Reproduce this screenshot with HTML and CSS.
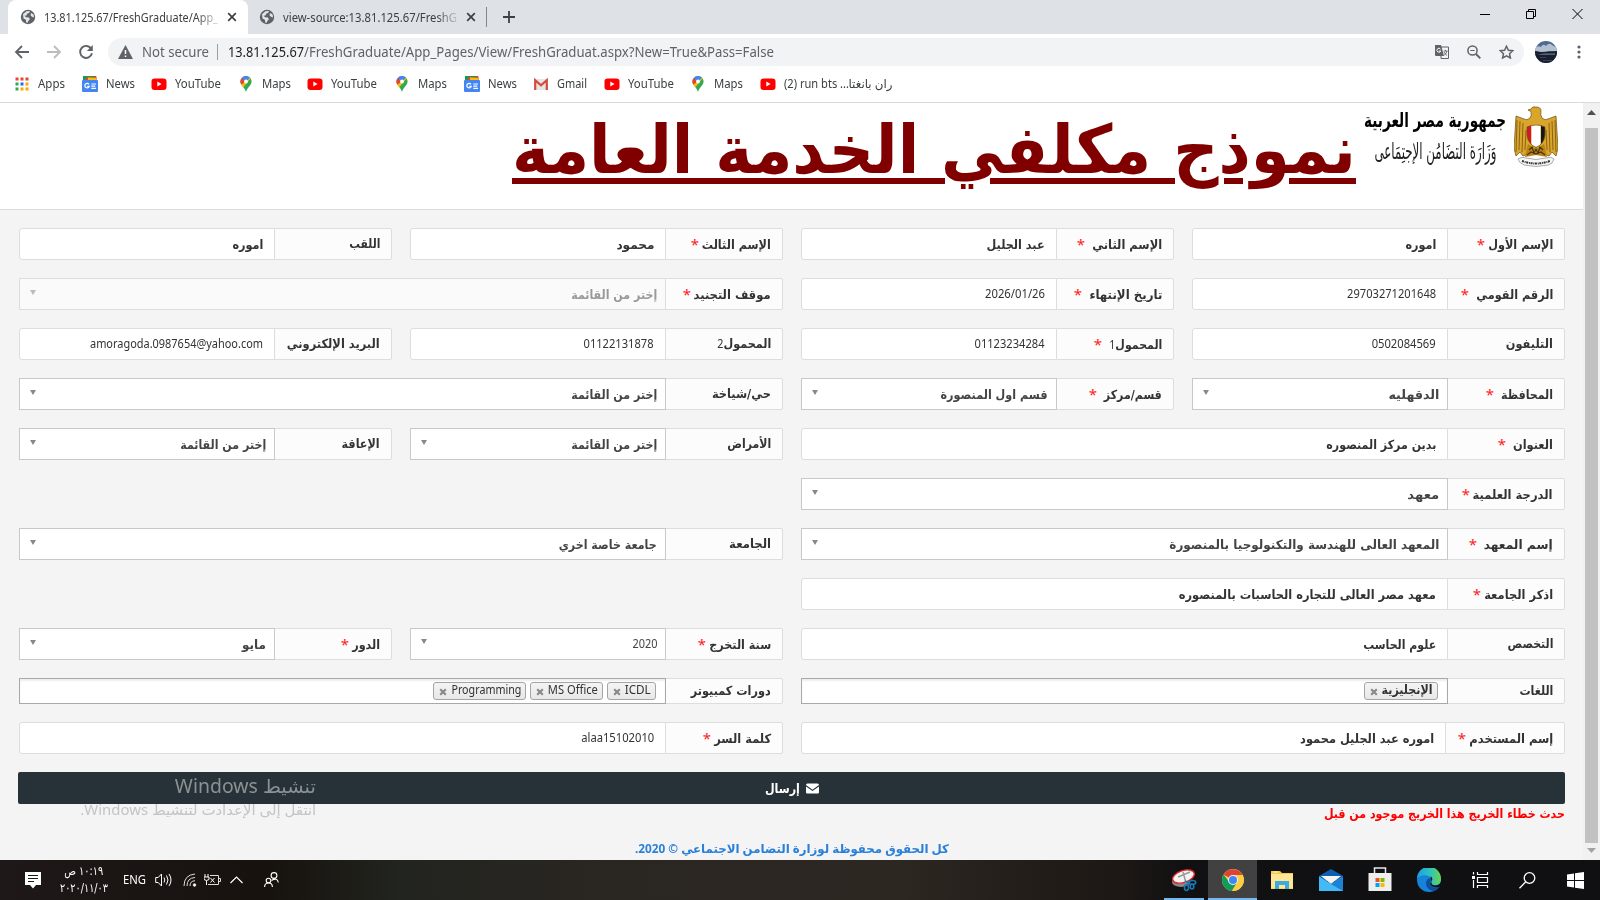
FILE: index.html
```html
<!DOCTYPE html>
<html lang="ar">
<head>
<meta charset="utf-8">
<title>نموذج مكلفي الخدمة العامة</title>
<link rel="stylesheet" href="styles.css">
</head>
<body>
<svg width="0" height="0" class="defs">
  <symbol id="globe" viewBox="0 0 16 16"><circle cx="8" cy="8" r="7.2" fill="#5f6368"/><path d="M3 5.2 6.5 2.2 10 2l-1 2-2 .8-.5 1.6-2 .4 1.6 1.4 2.8.3 1 1.8-1.6 1.6-.6 1.9-1.5-.4-.3-2.6L3.500 9.500zM11 4l2.600 1.500.4 3-2-.8-1.500-1.500z" fill="#e4e6e9"/></symbol>
  <symbol id="x" viewBox="0 0 10 10"><path d="M1.200 1.200l7.600 7.600M8.800 1.200L1.200 8.800" stroke="#3c4043" stroke-width="1.700"/></symbol>
  <symbol id="xb" viewBox="0 0 10 10"><path d="M1.500 1.500l7 7M8.500 1.500l-7 7" stroke="#888" stroke-width="2.600"/></symbol>
  <symbol id="yt" viewBox="0 0 16 16"><rect x=".5" y="2.500" width="15" height="11.500" rx="3" fill="#f00"/><path d="M6.300 5.600v5L10.600 8.100z" fill="#fff"/></symbol>
  <symbol id="pin" viewBox="0 0 16 16"><path d="M8 0a5.600 5.600 0 0 1 5.600 5.600C13.600 9.500 9.500 11 8 16 6.500 11 2.400 9.500 2.400 5.600A5.600 5.600 0 0 1 8 0z" fill="#34a853"/><path d="M8 5.600L3.600 2.200A5.600 5.600 0 0 1 12 1.700z" fill="#4285f4"/><path d="M8 5.600L3.600 2.200A5.600 5.600 0 0 0 3.300 8.600z" fill="#ea4335"/><path d="M8 5.600L3.200 8.700 5.300 11.300 12.600 2.400 12 1.700z" fill="#fbbc04"/><circle cx="8" cy="5.600" r="2" fill="#fff"/></symbol>
  <symbol id="gn" viewBox="0 0 16 16"><path d="M1 0h13v5H1z" fill="#0f9d58"/><path d="M3.500 1.500L14.500.5l.5 5H4z" fill="#ea4335"/><path d="M6 1.500l9 .5-1 4H6z" fill="#fbbc04"/><rect y="4" width="16" height="12" rx="1" fill="#4285f4"/><path d="M7 8.300A2.300 2.300 0 1 0 7.300 10.300H5.200M9.300 8h4.700M9.300 10.200h4M9.300 12.400h4.700" fill="none" stroke="#fff" stroke-width="1.200"/></symbol>
  <symbol id="env" viewBox="0 0 13 11"><path d="M0 2Q0 .5 1.500.5h10Q13 .5 13 2L6.500 6.800z M0 3.500l6.500 4.600L13 3.500V9.300q0 1.200-1.200 1.200H1.200Q0 10.500 0 9.300z" fill="#fff"/></symbol>
</svg>

<div class="strip">
  <div class="tab on"><svg class="i16"><use href="#globe"/></svg><div class="tt"><span class="t" data-w="174">13.81.125.67/FreshGraduate/App_</span></div><svg class="i10"><use href="#x"/></svg></div>
  <div class="tab"><svg class="i16"><use href="#globe"/></svg><div class="tt"><span class="t" data-w="174">view-source:13.81.125.67/FreshG</span></div><svg class="i10"><use href="#x"/></svg></div>
  <div class="tabsep"></div>
  <svg class="plus" viewBox="0 0 12 12"><path d="M6 0v12M0 6h12" stroke="#3c4043" stroke-width="1.800"/></svg>
  <div class="wc">
    <svg width="11" height="12"><path d="M0 6.500h10" stroke="#000"/></svg>
    <svg width="11" height="12" fill="none" stroke="#000"><path d="M.5 3.500h7v7h-7zM2.500 3.500v-2h7v7h-2"/></svg>
    <svg width="11" height="12"><path d="M.5 1l10 10M10.500 1L.5 11" stroke="#000"/></svg>
  </div>
</div>

<div class="bar">
  <svg class="nav" viewBox="0 0 16 16"><path d="M15 8H2M8 2L2 8l6 6" fill="none" stroke="#5f6368" stroke-width="1.800"/></svg>
  <svg class="nav" viewBox="0 0 16 16"><path d="M1 8h13M8 2l6 6-6 6" fill="none" stroke="#babcbe" stroke-width="1.800"/></svg>
  <svg class="nav" viewBox="0 0 16 16"><path d="M13.300 4.800A6 6 0 1 0 14 9.300" fill="none" stroke="#5f6368" stroke-width="1.900"/><path d="M14.800 1v6H8.800z" fill="#5f6368"/></svg>
  <div class="omni">
    <svg width="15" height="14" viewBox="0 0 15 14"><path d="M7.500 0L15 14H0z" fill="#5f6368"/><path d="M7.500 5v4M7.500 10.500v1.600" stroke="#fff" stroke-width="1.500"/></svg>
    <span class="t sec" data-w="67">Not secure</span><i class="osep"></i>
    <span class="t host" data-w="76">13.81.125.67</span><span class="t path" data-w="470">/FreshGraduate/App_Pages/View/FreshGraduat.aspx?New=True&amp;Pass=False</span>
    <div class="oi">
      <svg width="14" height="14" viewBox="0 0 14 14"><path d="M6 2h7.500v11.500H6z" fill="#f1f3f4" stroke="#5f6368"/><path d="M0 0h6l3 11H1Q0 11 0 10z" fill="#5f6368"/><path d="M5.500 4A2 2 0 1 0 5.800 6H4" fill="none" stroke="#fff"/><path d="M8.500 6h4M10.500 5v1M12 6q-1 3-3 4.500M9 7q1 2 3 3.500" fill="none" stroke="#5f6368" stroke-width=".9"/></svg>
      <svg width="14" height="14" viewBox="0 0 14 14" fill="none" stroke="#5f6368"><circle cx="5.500" cy="5.500" r="4.600" stroke-width="1.500"/><path d="M9 9l4.300 4.300" stroke-width="1.900"/><path d="M3.300 5.500h4.400"/></svg>
      <svg width="15" height="14" viewBox="0 0 15 14"><path d="M7.500 1.200l1.900 4 4.400.5-3.300 3 .9 4.300-3.900-2.200L3.600 13l.9-4.300-3.300-3 4.400-.5z" fill="none" stroke="#5f6368" stroke-width="1.500"/></svg>
    </div>
  </div>
  <svg class="ava" viewBox="0 0 22 22"><clipPath id="c"><circle cx="11" cy="11" r="11"/></clipPath><g clip-path="url(#c)"><path d="M0 0h22v22H0z" fill="#4d6a93"/><path d="M0 7q3-3 6-1 2-4 5-1 3-4 6-1l5 3v4l-8-1-5 2-9-2z" fill="#b4bfd0"/><path d="M0 10l6 1 16-1v12H0z" fill="#18202f"/><path d="M2 13.500l7-1h11v1.200H9z" fill="#6b7a90"/><path d="M5 16h6v1H5zM8 19h9v1H8z" fill="#34425a"/></g></svg>
  <svg class="dots" viewBox="0 0 4 16" fill="#5f6368"><circle cx="2" cy="3" r="1.600"/><circle cx="2" cy="8" r="1.600"/><circle cx="2" cy="13" r="1.600"/></svg>
</div>

<div class="marks">
  <div><svg class="i16" viewBox="0 0 16 16"><path d="M1.500 1.500h3v3h-3zM6.500 1.500h3v3h-3zM11.500 1.500h3v3h-3z" fill="#ea4335"/><path d="M1.500 6.500h3v3h-3zM1.500 11.500h3v3h-3z" fill="#34a853"/><path d="M6.500 6.500h3v3h-3z" fill="#1a73e8"/><path d="M11.500 6.500h3v3h-3zM6.500 11.500h3v3h-3zM11.500 11.500h3v3h-3z" fill="#f9ab00"/></svg><span class="t" data-w="27">Apps</span></div>
  <div><svg class="i16"><use href="#gn"/></svg><span class="t" data-w="29">News</span></div>
  <div><svg class="i16"><use href="#yt"/></svg><span class="t" data-w="46">YouTube</span></div>
  <div><svg class="i16"><use href="#pin"/></svg><span class="t" data-w="29">Maps</span></div>
  <div><svg class="i16"><use href="#yt"/></svg><span class="t" data-w="46">YouTube</span></div>
  <div><svg class="i16"><use href="#pin"/></svg><span class="t" data-w="29">Maps</span></div>
  <div><svg class="i16"><use href="#gn"/></svg><span class="t" data-w="29">News</span></div>
  <div><svg class="i16" viewBox="0 0 16 16"><path d="M1 3h14v11H1z" fill="#e6e6e6"/><path d="M2.200 14V4.200L8 9.300l5.800-5.100V14" fill="none" stroke="#d54c3f" stroke-width="2.200"/></svg><span class="t" data-w="30">Gmail</span></div>
  <div><svg class="i16"><use href="#yt"/></svg><span class="t" data-w="46">YouTube</span></div>
  <div><svg class="i16"><use href="#pin"/></svg><span class="t" data-w="29">Maps</span></div>
  <div><svg class="i16"><use href="#yt"/></svg><span class="t" data-w="65">(2) run bts ...</span><span class="t" dir="rtl" data-w="44">ران بانغتا</span></div>
</div>

<div class="view">
<main dir="rtl">
  <header>
    <svg class="emblem" viewBox="0 0 44 61">
      <path d="M22 1q-4-1-5 2l-3 1 3 1.500q1 4-1 6.500-3 3-6 1L2 10 0 42l2 8 4-4 3 4 7-3h12l7 3 3-4 4 4 2-8-2-32-8 3q-3 2-6-1-2-3-1-7 0-4-5-4z" fill="#d9a62b" stroke="#6b4a10" stroke-width=".7"/>
      <path d="M3 14L2 46M6 15L5 44M9 17L8 46M12 24l-1 20M41 14l1 32M38 15l1 29M35 17l1 29M32 24l1 20" stroke="#8a6215" stroke-width="1"/>
      <path d="M13 21l4-1.500V38q-4-4-4-10z" fill="#d8142a"/><path d="M17.500 19.300q4-1 9 0V39L22 41l-4.500-2z" fill="#fff"/><path d="M27 19.500l4 1.500v8q0 5-4 9z" fill="#15151c"/>
      <path d="M13 21q9-4 18 0v8q-1 9-9 12.500Q14 38 13 29z" fill="none" stroke="#765112" stroke-width=".8"/>
      <path d="M14 38l-3 13 11-2 11 2-3-13-8 5z" fill="#b78316"/><path d="M15 44l3-3 2 6 2-4 2 4 2-6 3 3M13 49l4-3 5 2 5-2 4 3" fill="none" stroke="#4b350e" stroke-width="1.200"/>
      <path d="M4 53q4-3 8-1 10 3 20 0 5-2 8 1-1 5-6 6-12 3-24 0-5-2-6-6z" fill="#f7f7f5" stroke="#888" stroke-width=".7"/><path d="M8 55q14 5 28 0" fill="none" stroke="#333" stroke-width="2" stroke-dasharray="2 .8 1 .6"/>
    </svg>
    <div class="min"><span class="t m1" data-w="142">جمهورية مصر العربية</span><span class="t m2" data-w="122">وَزَارَة التضَامُن الإجتِمَاعى</span></div>
    <h1><span class="t" data-w="844">نموذج مكلفي الخدمة العامة</span></h1>
  </header>

  <form>
    <div class="f"><label><span class="t" data-w="65">الإسم الأول</span><i>*</i></label><div class="in"><span class="t" data-w="31">اموره</span></div></div>
    <div class="f"><label><span class="t" data-w="70">الإسم الثاني</span><i class="g">*</i></label><div class="in"><span class="t" data-w="58">عبد الجليل</span></div></div>
    <div class="f"><label><span class="t" data-w="69">الإسم الثالث</span><i>*</i></label><div class="in"><span class="t" data-w="38">محمود</span></div></div>
    <div class="f"><label class="up"><span class="t" data-w="31">اللقب</span></label><div class="in"><span class="t" data-w="31">اموره</span></div></div>

    <div class="f"><label><span class="t" data-w="77">الرقم القومي</span><i class="g">*</i></label><div class="in n"><span class="t" data-w="89">29703271201648</span></div></div>
    <div class="f"><label><span class="t" data-w="73">تاريخ الإنتهاء</span><i class="g">*</i></label><div class="in n"><span class="t" dir="ltr" data-w="60">2026/01/26</span></div></div>
    <div class="f w2 lw"><label><span class="t" data-w="77">موقف التجنيد</span><i>*</i></label><div class="se off"><span class="t" data-w="86">إختر من القائمة</span></div></div>

    <div class="f"><label class="up"><span class="t" data-w="47">التليفون</span></label><div class="in n"><span class="t" data-w="64">0502084569</span></div></div>
    <div class="f"><label><span class="t" data-w="53">المحمول<em>1</em></span><i class="g">*</i></label><div class="in n"><span class="t" data-w="70">01123234284</span></div></div>
    <div class="f"><label class="up"><span class="t" data-w="54">المحمول<em>2</em></span></label><div class="in n"><span class="t" data-w="70">01122131878</span></div></div>
    <div class="f"><label class="up"><span class="t" data-w="93">البريد الإلكتروني</span></label><div class="in n"><span class="t" dir="ltr" data-w="173">amoragoda.0987654@yahoo.com</span></div></div>

    <div class="f"><label><span class="t" data-w="52">المحافظة</span><i class="g">*</i></label><div class="se"><span class="t" data-w="51">الدقهليه</span></div></div>
    <div class="f"><label><span class="t" data-w="58">قسم/مركز</span><i class="g">*</i></label><div class="se"><span class="t" data-w="107">قسم اول المنصورة</span></div></div>
    <div class="f w2 lw"><label class="up"><span class="t" data-w="59">حي/شياخة</span></label><div class="se"><span class="t" data-w="86">إختر من القائمة</span></div></div>

    <div class="f w2"><label><span class="t" data-w="40">العنوان</span><i class="g">*</i></label><div class="in"><span class="t" data-w="110">بدين مركز المنصوره</span></div></div>
    <div class="f"><label class="up"><span class="t" data-w="44">الأمراض</span></label><div class="se"><span class="t" data-w="86">إختر من القائمة</span></div></div>
    <div class="f"><label class="up"><span class="t" data-w="38">الإعاقة</span></label><div class="se"><span class="t" data-w="86">إختر من القائمة</span></div></div>

    <div class="f w2 solo"><label><span class="t" data-w="80">الدرجة العلمية</span><i>*</i></label><div class="se"><span class="t" data-w="32">معهد</span></div></div>

    <div class="f w2 solo"><label><span class="t" data-w="69">إسم المعهد</span><i class="g">*</i></label><div class="se"><span class="t" data-w="270">المعهد العالى للهندسة والتكنولوجيا بالمنصورة</span></div></div>
    <div class="f w2 lw"><label class="up"><span class="t" data-w="42">الجامعة</span></label><div class="se"><span class="t" data-w="98">جامعة خاصة اخري</span></div></div>

    <div class="f w2 solo"><label><span class="t" data-w="69">اذكر الجامعة</span><i>*</i></label><div class="in"><span class="t" data-w="257">معهد مصر العالى للتجاره الحاسبات بالمنصوره</span></div></div>

    <div class="f w2 solo"><label class="up"><span class="t" data-w="46">التخصص</span></label><div class="in"><span class="t" data-w="73">علوم الحاسب</span></div></div>
    <div class="f"><label><span class="t" data-w="62">سنة التخرج</span><i>*</i></label><div class="se n"><span class="t" data-w="25">2020</span></div></div>
    <div class="f"><label><span class="t" data-w="28">الدور</span><i>*</i></label><div class="se"><span class="t" data-w="24">مايو</span></div></div>

    <div class="f w2 solo sm"><label class="up"><span class="t" data-w="34">اللغات</span></label><div class="mu"><b><span class="t ar" data-w="51">الإنجليزية</span><svg class="cx"><use href="#xb"/></svg></b></div></div>
    <div class="f w2 lw sm"><label class="up"><span class="t" data-w="80">دورات كمبيوتر</span></label><div class="mu"><b><span class="t" data-w="26">ICDL</span><svg class="cx"><use href="#xb"/></svg></b><b><span class="t" data-w="50">MS Office</span><svg class="cx"><use href="#xb"/></svg></b><b><span class="t" data-w="70">Programming</span><svg class="cx"><use href="#xb"/></svg></b></div></div>

    <div class="f w2 solo user"><label><span class="t" data-w="84">إسم المستخدم</span><i>*</i></label><div class="in"><span class="t" data-w="134">اموره عبد الجليل محمود</span></div></div>
    <div class="f w2 lw"><label><span class="t" data-w="57">كلمة السر</span><i>*</i></label><div class="in n"><span class="t" data-w="73">alaa15102010</span></div></div>
  </form>
  <div class="send"><svg width="13" height="11"><use href="#env"/></svg><span class="t" data-w="35">إرسال</span></div>
  <div class="err"><span class="t" data-w="241">حدث خطاء الخريج هذا الخريج موجود من قبل</span></div>
  <footer><span class="t" data-w="314">كل الحقوق محفوظة لوزارة التضامن الاجتماعي © 2020.</span></footer>
  <div class="wm" dir="rtl"><span class="t w1" data-w="141">تنشيط Windows</span><span class="t w22" data-w="236">انتقل إلى الإعدادت لتنشيط Windows.</span></div>
</main>
<aside><svg width="9" height="5"><path d="M0 5h9L4.500 0z" fill="#505050"/></svg><div class="thumb"></div><svg width="9" height="5"><path d="M0 0h9L4.500 5z" fill="#a3a3a3"/></svg></aside>
</div>

<div class="task">
  <div class="tray">
    <svg class="note" width="16" height="17"><path d="M0 0h16v13h-5l-3 3.500L5 13H0z" fill="#fff"/><path d="M3 3.500h10M3 6.500h10M3 9.500h6" stroke="#1c1817"/></svg>
    <div class="clock"><span class="t" dir="rtl" data-w="39">١٠:١٩ ص</span><span class="t" data-w="48">٢٠٢٠/١١/٠٣</span></div>
    <span class="t eng" data-w="23">ENG</span>
    <svg class="spk" width="17" height="14" fill="none" stroke="#fff"><path d="M.7 4.500h2.500L6.500 1v12L3.200 9.500H.7z"/><path d="M9 4.500q1.600 2.500 0 5M11.500 2.500q3 4.500 0 9M14 1q4 6 0 12"/></svg>
    <svg class="wifi" width="14" height="14" fill="none" stroke="#ddd"><path d="M1 13Q1 2 12 1M4 13Q4 5 12 4.500M7 13q0-5 5-5.300"/><circle cx="11.500" cy="12" r="1.300" fill="#fff"/></svg>
    <svg class="bat" width="17" height="12" fill="none" stroke="#ddd"><path d="M6 1.500h8.500v9H4M15 4.500h1.500v3H15"/><path d="M1 0v3M4 0v3M0 3h5v2.500q-2.500 2-5 0zM2.500 6.500V11M6.500 4l4 4.500M10.500 4l-4 4.500" stroke="#fff"/></svg>
    <svg class="chev" width="13" height="8"><path d="M.5 7l6-6 6 6" fill="none" stroke="#fff" stroke-width="1.200"/></svg>
    <svg class="ppl" width="15" height="16" fill="none" stroke="#fff" stroke-width="1.100"><circle cx="10" cy="3.500" r="2.900"/><circle cx="4.500" cy="8.500" r="2.300"/><path d="M.6 15q0-4 3.900-4t3.900 4M7.500 8.500q6-3.500 6.800 2"/></svg>
  </div>
  <div class="apps">
    <div class="run"><svg width="26" height="24" viewBox="0 0 26 24"><ellipse cx="10" cy="14" rx="9" ry="5" fill="#888"/><ellipse cx="12.500" cy="8.500" rx="11.300" ry="6" transform="rotate(-18 12.500 8.500)" fill="#f4f4f4" stroke="#d22" stroke-width="1.300"/><path d="M7 9l12-5M12 4l3 11" stroke="#999" stroke-width="1.500"/><g fill="none" stroke="#1979b5" stroke-width="1.600"><path d="M14 13l5 3"/><ellipse cx="21.500" cy="14.500" rx="3.200" ry="2"/><ellipse cx="15.500" cy="19.500" rx="2" ry="3"/><ellipse cx="21" cy="18.500" rx="1.800" ry="2.500"/></g></svg></div>
    <div class="run act"><svg width="22" height="22" viewBox="0 0 22 22"><circle cx="11" cy="11" r="11" fill="#ffcd41"/><path d="M11 11L1.500 5.500A11 11 0 0 1 20.600 6H11z" fill="#db4437"/><path d="M1.500 5.500A11 11 0 0 0 10 22l4.500-7.500L8 14z" fill="#0f9d58"/><path d="M20.500 6H11l4 7.500L10 22A11 11 0 0 0 20.500 6z" fill="#ffcd41"/><circle cx="11" cy="11" r="5" fill="#f1f1f1"/><circle cx="11" cy="11" r="4" fill="#4285f4"/></svg></div>
    <div><svg width="22" height="18" viewBox="0 0 22 18"><path d="M0 0h9l2 2h11v16H0z" fill="#f5c84b"/><path d="M0 3h22v14.500H0z" fill="#ffe694"/><path d="M4 10h14v8h-4v-4H8v4H4z" fill="#3cabdf"/><path d="M2 1h5" stroke="#fff3c2"/></svg></div>
    <div><svg width="24" height="22" viewBox="0 0 24 22"><path d="M0 7l12-7 12 7v5H0z" fill="#0f5fb0"/><path d="M0 7.500V22h24V7.500L12 15z" fill="#31a8ee"/><path d="M2 7h20l-10 8z" fill="#f4f4f4"/><path d="M12 15L0 7.500V22h24z" fill="#42baf5"/><path d="M12 15l12-7.500V22z" fill="#1c83d4"/></svg></div>
    <div><svg class="store" width="24" height="24" viewBox="0 0 24 24"><path d="M6.500 7V1h11v6" fill="none" stroke="#e8e8e8" stroke-width="1.500"/><path d="M.5 6h23v18H.5z" fill="#eee"/><path d="M7.500 11h4v4h-4z" fill="#f25022"/><path d="M12.500 11h4v4h-4z" fill="#7fba00"/><path d="M7.500 16h4v4h-4z" fill="#00a4ef"/><path d="M12.500 16h4v4h-4z" fill="#ffb900"/></svg></div>
    <div><svg width="24" height="24" viewBox="0 0 24 24"><defs><linearGradient id="e"><stop offset="0" stop-color="#1ba0e0"/><stop offset=".5" stop-color="#2bc0c8"/><stop offset="1" stop-color="#68d650"/></linearGradient></defs><circle cx="12" cy="12" r="12" fill="#1683d8"/><path d="M0 10.500A12 12 0 0 1 24 11q0 6-6 6-5 0-3.500-3.500Q15 9 10 7.500 4 6.500 0 10.500z" fill="url(#e)"/><path d="M14 10q-5 0-5 6 1 6 8 7 4-1 6-5-6 3-9.500-.5-2-3 1-5.500z" fill="#0c4f9e"/><path d="M14.500 13.500q2-3-1-5.500M14.500 13q-1 4 3.500 4.500 5 0 5.800-4L24 17l-2 2q-6 1-8.500-2-1-2 1-4z" fill="#111"/></svg></div>
    <div class="tv"><svg width="17" height="16" fill="none" stroke="#fff" stroke-width="1.200"><path d="M5.500 0v2.500h10V0M5.500 5.500h10v5h-10zM5.500 16v-2.500h10V16M1.500 0v2.500M1.500 8v8"/><path d="M0 4h3v3H0z" fill="#fff" stroke="none"/></svg></div>
    <div class="se1"><svg width="17" height="17" fill="none" stroke="#fff" stroke-width="1.300"><circle cx="10.500" cy="6" r="5.300"/><path d="M6.800 9.800L.5 16.200"/></svg></div>
    <div><svg width="17" height="17" fill="#fff"><path d="M0 2.500L7 1.500V8H0zM8 1.300L17 0v8H8zM0 9h7v6.500l-7-1zM8 9h9v8l-9-1.300z"/></svg></div>
  </div>
</div>
<script src="fit.js"></script>
</body>
</html>
```
FILE: styles.css
```css
* { box-sizing: border-box; }
body { margin: 0; width: 1600px; height: 900px; overflow: hidden; background: #fff; font-family: "Noto Sans", "Open Sans", "DejaVu Sans", sans-serif; font-size: 12px; color: #3c4043; display: flex; flex-direction: column; }
svg { display: block; flex: none; }
.defs { position: absolute; }
.t { display: inline-block; white-space: nowrap; flex: none; }
.t > span { display: inline-block; white-space: nowrap; }
.i16 { width: 16px; height: 16px; }
.i10 { width: 10px; height: 10px; }

.strip { height: 34px; background: #dee1e6; display: flex; align-items: center; padding-left: 8px; flex: none; }
.tab { height: 34px; width: 239px; display: flex; align-items: center; padding-left: 11px; }
.tab.on { background: #fff; border-radius: 8px 8px 0 0; width: 240px; padding-left: 12px; }
.tt { width: 174px; margin: 0 15px 0 8px; -webkit-mask-image: linear-gradient(90deg, #000 88%, rgba(0, 0, 0, .15)); }
.tab .i10 { margin-left: -6px; }
.tabsep { width: 1px; height: 20px; background: #80868b; margin: 0 16px 0 -1px; }
.plus { width: 12px; height: 12px; }
.wc { margin-left: auto; display: flex; gap: 35px; padding: 0 17px 6px 0; }

.bar { height: 36px; display: flex; align-items: center; padding-left: 14px; flex: none; }
.nav { width: 16px; height: 16px; margin-right: 16px; }
.omni { width: 1416px; height: 28px; border-radius: 14px; background: #f1f3f4; display: flex; align-items: center; padding: 0 10px 0 10px; margin-left: -2px; font-size: 14px; color: #5f6368; }
.omni .t { margin-top: -1px; }
.sec { margin-left: 9px; }
.osep { width: 1px; height: 16px; background: #9aa0a6; margin: 0 10px 0 8px; }
.host { color: #202124; }
.oi { margin-left: auto; display: flex; gap: 18px; }
.ava { width: 22px; height: 22px; margin-left: 11px; }
.dots { width: 4px; height: 16px; margin-left: 20px; }

.marks { height: 33px; display: flex; align-items: center; padding: 0 0 5px 14px; gap: 16.6px; border-bottom: 1px solid #d8dadc; flex: none; }
.marks div { display: flex; align-items: center; }
.marks .i16 { margin-right: 8px; }
.marks .t { margin-top: -1px; }

.view { flex: none; height: 757px; display: flex; overflow: hidden; }
main { width: 1583px; background: #f4f4f4; position: relative; color: #2b2b2b; }
aside { width: 17px; background: #f1f1f1; display: flex; flex-direction: column; align-items: center; justify-content: space-between; padding: 7px 0; }
.thumb { width: 13px; height: 715px; background: #c1c1c1; margin-top: 7px; }
header { height: 107px; background: #fff; border-bottom: 1px solid #dcdcdc; display: flex; padding-right: 25px; }
.emblem { width: 44px; height: 61px; margin-top: 3px; }
.min { display: flex; flex-direction: column; align-items: center; width: 142px; margin: 0 8px 0 8px; padding-top: 1px; color: #000; font-family: "DejaVu Sans", sans-serif; }
.m1 { font-size: 20px; font-weight: bold; line-height: 32px; }
.m2 { font-size: 23px; line-height: 32px; font-family: "DejaVu Sans", serif; color: #222; margin-top: -1px; }
h1 { margin: 0; font: bold 67px/86px "DejaVu Sans", sans-serif; color: #800000; padding-top: 4px; }
h1 .t > span { text-decoration: underline; text-decoration-thickness: 6px; text-underline-offset: 5px; }

form { display: grid; grid-template-columns: 373px 373px 373px 373px; column-gap: 18px; row-gap: 18px; padding: 18px 18px 0; }
.f { display: flex; height: 32px; grid-column: span 1; }
.f:not(.w2):nth-child(4n) { min-width: 0; }
.w2 { grid-column: span 2; }
.solo { grid-column: 1 / span 2; }
.sm { height: 26px; }
label { width: 118px; flex: none; background: #fcfcfc; border: 1px solid #ddd; border-radius: 0 2px 2px 0; padding: 0 11px; display: flex; align-items: center; font-family: "DejaVu Sans", sans-serif; font-weight: bold; font-size: 12.5px; color: #333; }
label.up { padding-bottom: 2px; }
label em { font: 12px "Noto Sans", sans-serif; }
label i { font: 15px/16px "Noto Sans", sans-serif; color: #f22; margin: 0 3px 1px 0; }
label i.g { margin-right: 7px; }
.user label { width: 120px; }
.in, .se, .mu { flex: 1; margin-right: -1px; background: #fff; border: 1px solid #ddd; display: flex; align-items: center; font-family: "DejaVu Sans", sans-serif; font-size: 12.5px; font-weight: bold; color: #333; }
.in { border-radius: 3px 0 0 3px; padding-right: 11px; }
.se { border-color: #c8c8c8; padding: 0 8px 0 10px; z-index: 1; color: #444; }
.se::after { content: ""; margin-right: auto; border: 3.5px solid transparent; border-top: 5px solid #888; border-bottom: 0; margin-bottom: 3px; }
.n { font-family: "Noto Sans", sans-serif; font-weight: normal; font-size: 12px; padding-bottom: 2px; }
.off { background: #fafafa; border-color: #ddd; color: #999; }
.off::after { border-top-color: #bbb; }
.mu { border-color: #a9a9a9; box-shadow: inset 0 2px 2px #eee; padding-right: 9px; gap: 4px; z-index: 1; }
.mu b { height: 18px; border: 1px solid #a5a5a5; border-radius: 3px; background: linear-gradient(#f4f4f4, #e8e8e8); display: flex; align-items: center; padding: 0 4px 0 5px; font: 12px/14px "Noto Sans", sans-serif; }
.mu b .t { margin-top: -2px; }
.mu b .ar { font: bold 12.5px/14px "DejaVu Sans", sans-serif; }
.cx { width: 8px; height: 8px; margin: 1px 4px 0 0; }
.send { margin: 18px 18px 0; height: 32px; background: #263238; border-radius: 2px; display: flex; align-items: center; justify-content: center; gap: 6px; color: #fff; font: bold 13px "DejaVu Sans", sans-serif; }
.err { padding-right: 18px; height: 19px; color: #f00; font: bold 12.5px/19px "DejaVu Sans", sans-serif; }
footer { text-align: center; margin-top: 17px; height: 20px; color: #2a80d8; font: bold 12px/18px "Noto Sans", "DejaVu Sans", sans-serif; }
.wm { position: absolute; right: 1267px; top: 669px; display: flex; flex-direction: column; color: #8c9193; }
.w1 { font-size: 19px; line-height: 28px; }
.w22 { font-size: 14px; line-height: 20px; color: #c4c4c4; }

.task { height: 40px; flex: none; display: flex; justify-content: space-between; background: linear-gradient(90deg, #1e1818 0, #17120e 270px, #22241f 400px, #2a2622 600px, #2d2722 900px, #1c1614 1130px, #111113 1180px, #101012); color: #fff; }
.tray { display: flex; align-items: center; padding-left: 25px; }
.clock { display: flex; flex-direction: column; align-items: center; width: 50px; margin-left: 18px; font-family: "DejaVu Sans", sans-serif; font-size: 12px; line-height: 17px; }
.eng { margin-left: 14px; margin-top: -2px; }
.spk { margin-left: 9px; }
.wifi { margin-left: 11px; }
.bat { margin-left: 7px; }
.chev { margin-left: 9px; }
.ppl { margin-left: 21px; }
.apps { display: flex; }
.apps div { width: 49px; display: flex; align-items: center; justify-content: center; }
.apps .run { background: linear-gradient(#76b9ed, #76b9ed) center bottom / 40px 2px no-repeat; }
.apps .act { background: linear-gradient(#76b9ed, #76b9ed) center bottom / 100% 2px no-repeat, #414141; }
.apps .tv { padding-left: 5px; }
.apps .se1 { padding-left: 2px; }
.store { margin-top: -2px; }
```
FILE: fit.js
```javascript
// Squeezes or stretches each text run to the width in its data-w attribute.
document.querySelectorAll('.t').forEach(function (el) {
  var inner = document.createElement('span');
  while (el.firstChild) inner.appendChild(el.firstChild);
  el.appendChild(inner);
  var w = +el.dataset.w;
  var rtl = getComputedStyle(el).direction === 'rtl';
  var natural = inner.getBoundingClientRect().width;
  el.style.width = w + 'px';
  inner.style.transformOrigin = (rtl ? 'right' : 'left') + ' center';
  inner.style.transform = 'scaleX(' + (w / natural) + ')';
});
```
